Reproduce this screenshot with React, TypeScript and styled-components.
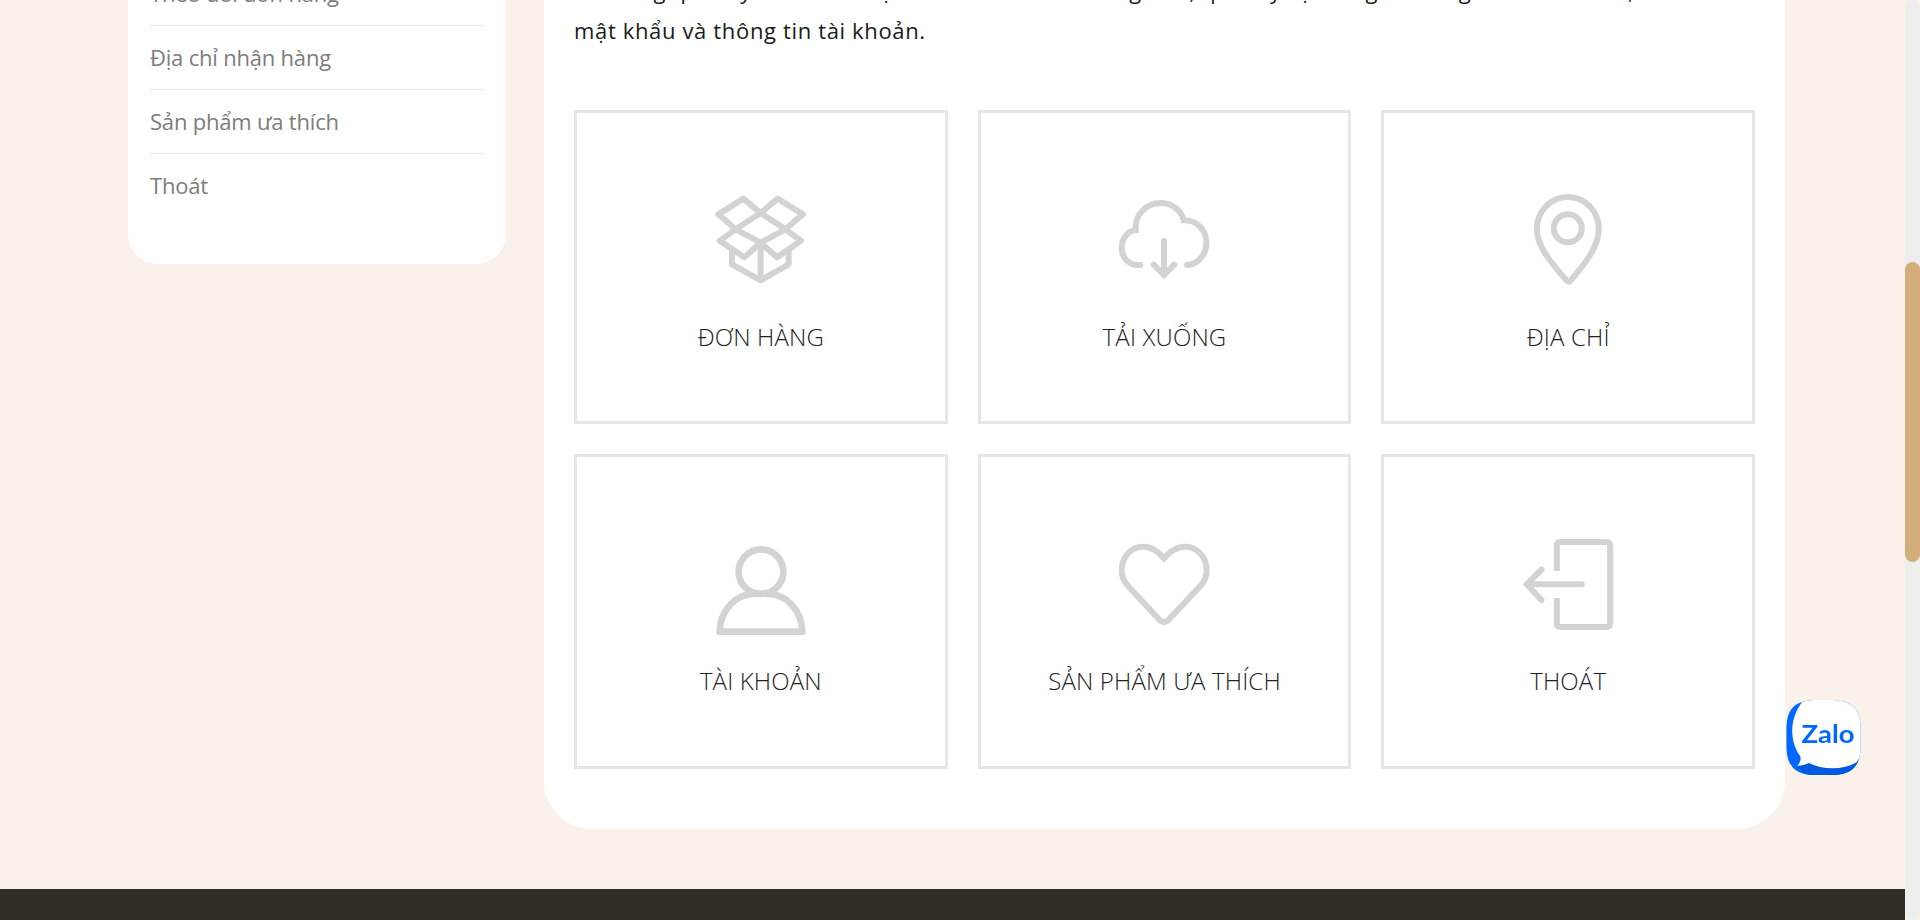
import React from "react";
import styled, { createGlobalStyle } from "styled-components";

const GlobalStyle = createGlobalStyle`
  * { box-sizing: border-box; }
  body { margin: 0; overflow: hidden; background: #f9f1ea; font-family: "Open Sans", sans-serif; }
`;

const Window = styled.div`
  display: flex;
  width: 1920px;
  height: 920px;
  overflow: hidden;
`;

const Page = styled.div`
  flex: 1;
  height: 920px;
  overflow: hidden;
`;

const Columns = styled.main`
  display: flex;
  align-items: flex-start;
  gap: 38px;
  margin-top: -38px;
  padding: 0 120px 60px 128px;
`;

const Sidebar = styled.nav`
  width: 378px;
  padding: 0 22px 46px;
  background: #fff;
  border-radius: 0 0 30px 30px;
`;

const MenuItem = styled.a`
  display: block;
  height: 64px;
  line-height: 62px;
  border-bottom: 1px solid #e5e5e5;
  color: #7c7c7c;
  font-size: 22px;
  letter-spacing: -0.2px;
  white-space: nowrap;

  &:last-child { border-bottom-color: transparent; }
`;

const Account = styled.section`
  width: 1241px;
  padding: 9px 30px 60px;
  background: #fff;
  border-radius: 0 0 48px 48px;
`;

const Intro = styled.p`
  margin: 0;
  height: 139px;
  color: #1a1a1a;
  font-size: 22px;
  line-height: 39.6px;
  letter-spacing: 0.65px;
  white-space: nowrap;
`;

const Tiles = styled.div`
  display: grid;
  grid-template-columns: repeat(3, 1fr);
  grid-auto-rows: 314.4px;
  gap: 30px;
`;

const Tile = styled.a`
  display: flex;
  flex-direction: column;
  align-items: center;
  padding-top: 74px;
  border: 3px solid #e6e6e6;
`;

const Icon = styled.svg`
  width: 100px;
  height: 100px;
  overflow: visible;
  fill: none;
  stroke: #d3d3d3;
  stroke-width: 18;
  stroke-linecap: round;
  stroke-miterlimit: 10;
`;

const Label = styled.span`
  margin-top: 30px;
  color: #222;
  font-size: 24px;
  font-weight: 300;
  line-height: 40px;
  letter-spacing: 0.15px;
  white-space: nowrap;
`;

const Footer = styled.footer`
  height: 60px;
  background: #332d28;
`;

const ScrollTrack = styled.div`
  width: 15px;
  height: 920px;
  padding-top: 262px;
  background: #eee;
  border-radius: 8px;
`;

const ScrollThumb = styled.div`
  height: 300px;
  background: #d3ae7b;
  border-radius: 8px;
`;

const ChatButton = styled.a`
  position: fixed;
  left: 1786px;
  top: 700px;
  width: 75px;
  height: 75px;

  svg { display: block; width: 100%; height: 100%; }
  text { font-family: Lato, sans-serif; font-weight: 700; font-size: 75px; }
`;

const menu = ["Theo dõi đơn hàng", "Địa chỉ nhận hàng", "Sản phẩm ưa thích", "Thoát"];

const tiles = [
  {
    label: "ĐƠN HÀNG",
    box: "93 21 300 300",
    art: (
      <g strokeLinejoin="round">
        <path d="M115 103 190 56 242 99 167 148ZM293 56 369 103 316 148 242 99ZM167 148 119 182 193 232 242 188ZM316 148 363 182 291 232 242 188Z" />
        <path d="M242 188V300M156 212V253L242 301 326 253V212" />
      </g>
    ),
  },
  {
    label: "TẢI XUỐNG",
    box: "103 21 300 300",
    art: (
      <>
        <path d="M182 255H174C145 255 126 230 126 204 126 175 145 152 168 150 164 104 200 69 243 69 276 69 304 89 312 121 352 120 380 150 380 188 380 226 352 255 322 255" />
        <path d="M253 183V282M222 254 253 285 284 254" />
      </>
    ),
  },
  {
    label: "ĐỊA CHỈ",
    box: "84.6 21 300 300",
    art: (
      <>
        <path d="M234 51C284 51 327 92 327 147 327 200 285 252 243 301Q237 309 230 301C187 252 141 200 141 147 141 92 184 51 234 51Z" />
        <circle cx="234" cy="145" r="42" />
      </>
    ),
  },
  {
    label: "TÀI KHOẢN",
    box: "92 3 300 300",
    art: (
      <g strokeWidth="20" strokeLinejoin="round">
        <circle cx="242" cy="125" r="67" />
        <path d="M118 305C120 240 165 192 225 191H259C319 192 364 240 366 305Z" />
      </g>
    ),
  },
  {
    label: "SẢN PHẨM ƯA THÍCH",
    box: "253 3 300 300",
    art: (
      <path d="M403 85C385 66 368 50 341 50 303 50 276 82 276 122 276 144 286 158 296 169L390 270Q403 282 416 270L511 169C521 158 531 144 531 122 531 82 504 50 466 50 438 50 421 66 403 85Z" />
    ),
  },
  {
    label: "THOÁT",
    box: "84.6 3 300 300",
    art: (
      <>
        <path
          strokeLinecap="butt"
          d="M201 123V47Q201 36 212 36H350Q361 36 361 47V280Q361 291 350 291H212Q201 291 201 280V204"
        />
        <path d="M276 163H114M155 119 111 163 155 210" />
      </>
    ),
  },
];

const ZaloLogo = () => (
  <svg viewBox="0 0 225 226">
    <defs>
      <clipPath id="badge">
        <path d="M0 95C0 25 25 0 95 0H130C200 0 225 25 225 95V130C225 200 200 226 130 226H95C25 226 0 200 0 130Z" />
      </clipPath>
    </defs>
    <g clipPath="url(#badge)">
      <path fill="#0068ff" d="M0 0H225V226H0Z" />
      <path fill="#005ae0" d="M33 198 70 190Q140 220 225 180V226H55Z" />
      <path fill="#fff" d="M54 0C10 48 8 120 41 167 47 177 42 189 33 198 48 198 57 195 69 190 110 210 165 213 211 188L225 170V0Z" />
    </g>
    <text x="46" y="131" textLength="160" lengthAdjust="spacingAndGlyphs" fill="#0068ff">
      Zalo
    </text>
  </svg>
);

export default function App() {
  return (
    <>
      <GlobalStyle />
      <Window>
        <Page>
          <Columns>
            <Sidebar>
              {menu.map((item) => (
                <MenuItem key={item}>{item}</MenuItem>
              ))}
            </Sidebar>
            <Account>
              <Intro>
                Từ trang quản lý tài khoản bạn có thể xem đơn hàng mới, quản lý địa chỉ giao hàng và thanh toán, and sửa
                <br />
                mật khẩu và thông tin tài khoản.
              </Intro>
              <Tiles>
                {tiles.map((tile) => (
                  <Tile key={tile.label}>
                    <Icon viewBox={tile.box}>{tile.art}</Icon>
                    <Label>{tile.label}</Label>
                  </Tile>
                ))}
              </Tiles>
            </Account>
          </Columns>
          <Footer />
        </Page>
        <ScrollTrack>
          <ScrollThumb />
        </ScrollTrack>
      </Window>
      <ChatButton>
        <ZaloLogo />
      </ChatButton>
    </>
  );
}
